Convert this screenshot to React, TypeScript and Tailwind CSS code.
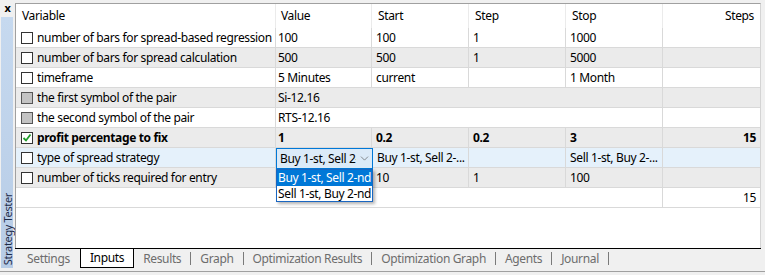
import { ChevronDown } from "lucide-react";

type Check = "off" | "disabled" | "on";

const Box = ({ state }: { state: Check }) => {
  if (state === "disabled") {
    return <div className="w-[12px] h-[12px] shrink-0 border border-[#555] bg-[#c3c3c3]" />;
  }
  return (
    <div className="w-[12px] h-[12px] shrink-0 border border-[#333] bg-white flex items-center justify-center">
      {state === "on" && (
        <svg width="10" height="10" viewBox="0 0 10 10">
          <path d="M1.5 5 L4 7.5 L8.5 1.5" fill="none" stroke="#1f9c2a" strokeWidth="1.8" />
        </svg>
      )}
    </div>
  );
};

const cell = "h-full flex items-center border-r border-[#d9d9d9] overflow-hidden whitespace-nowrap";

const VarCell = ({ state, name, bold }: { state: Check; name: string; bold?: boolean }) => (
  <div className={`${cell} w-[260px] pl-[5px] gap-[4px] ${bold ? "font-bold" : ""}`}>
    <Box state={state} />
    <span>{name}</span>
  </div>
);

const rowCls = "flex h-[20px] border-b border-[#d9d9d9] shrink-0";

const Row = ({
  bg,
  state,
  name,
  vals,
  steps = "",
  bold,
}: {
  bg: string;
  state: Check;
  name: string;
  vals: string[];
  steps?: string;
  bold?: boolean;
}) => (
  <div className={`${rowCls} ${bg} ${bold ? "font-bold" : ""}`}>
    <VarCell state={state} name={name} bold={bold} />
    <div className={`${cell} w-[96px] pl-[2px]`}>{vals[0]}</div>
    <div className={`${cell} w-[97px] pl-[4px]`}>{vals[1]}</div>
    <div className={`${cell} w-[97px] pl-[4px]`}>{vals[2]}</div>
    <div className={`${cell} w-[97px] pl-[4px]`}>{vals[3]}</div>
    <div className="h-full flex items-center justify-end w-[96px] pr-[3px]">{steps}</div>
  </div>
);

const SpanRow = ({ bg, name, value }: { bg: string; name: string; value: string }) => (
  <div className={`${rowCls} ${bg}`}>
    <VarCell state="disabled" name={name} />
    <div className={`${cell} w-[387px] pl-[2px]`}>{value}</div>
    <div className="h-full w-[96px]" />
  </div>
);

const Sep = () => <div className="w-px h-[13px] bg-[#7a7a7a]" />;

export default function App() {
  const tabs = ["Results", "Graph", "Optimization Results", "Optimization Graph", "Agents", "Journal"];

  return (
    <div className="w-[765px] h-[275px] bg-[#f0f0f0] flex flex-col font-['Noto_Sans',sans-serif] text-[12px] tracking-[-0.35px] text-black overflow-hidden">
      <div className="flex h-[271px]">
        {/* side strip */}
        <div className="w-[15px] flex flex-col items-center">
          <div className="h-[17px] w-full flex items-center justify-center font-bold text-[11px] leading-none pb-[3px]">
            x
          </div>
          <div className="w-[12px] ml-[-1px] h-[251px] bg-gradient-to-b from-[#c6d9ef] to-[#b7cce6] flex items-end justify-center pb-[3px]">
            <span className="[writing-mode:vertical-rl] rotate-180 text-[11px] text-[#1e2b48] leading-none whitespace-nowrap">
              Strategy Tester
            </span>
          </div>
        </div>

        <div className="w-[746px] flex flex-col">
          <div className="h-[3px]" />
          <div className="h-[245px] bg-white border-t border-l border-r border-t-[#a0a0a0] border-l-[#a0a0a0] border-r-[#d4d4d4] flex flex-col">
            {/* header */}
            <div className="flex h-[24px] shrink-0">
              <div className="w-[260px] h-full flex items-center pl-[6px] border-r border-[#ebebeb]">Variable</div>
              <div className="w-[96px] h-full flex items-center pl-[5px] border-r border-[#ebebeb]">Value</div>
              <div className="w-[97px] h-full flex items-center pl-[6px] border-r border-[#ebebeb]">Start</div>
              <div className="w-[97px] h-full flex items-center pl-[6px] border-r border-[#ebebeb]">Step</div>
              <div className="w-[97px] h-full flex items-center pl-[6px] border-r border-[#ebebeb]">Stop</div>
              <div className="w-[96px] h-full flex items-center justify-end pr-[5px]">Steps</div>
            </div>

            <Row bg="bg-white" state="off" name="number of bars for spread-based regression" vals={["100", "100", "1", "1000"]} />
            <Row bg="bg-[#ebebeb]" state="off" name="number of bars for spread calculation" vals={["500", "500", "1", "5000"]} />
            <Row bg="bg-white" state="off" name="timeframe" vals={["5 Minutes", "current", "", "1 Month"]} />
            <SpanRow bg="bg-[#ebebeb]" name="the first symbol of the pair" value="Si-12.16" />
            <SpanRow bg="bg-white" name="the second symbol of the pair" value="RTS-12.16" />
            <Row bg="bg-[#ebebeb]" state="on" bold name="profit percentage to fix" vals={["1", "0.2", "0.2", "3"]} steps="15" />

            {/* row with open combo box */}
            <div className={`${rowCls} bg-[#e5f1fb]`}>
              <VarCell state="off" name="type of spread strategy" />
              <div className="h-full w-[96px] relative">
                <div className="absolute left-0 top-0 z-10 w-[97px] h-[21px] border border-[#0078d7] bg-[#dbeaf8] flex items-center pl-[3px]">
                  <span className="w-[76px] overflow-hidden whitespace-nowrap">Buy 1-st, Sell 2-nd</span>
                  <ChevronDown className="ml-[2px] text-[#555]" size={13} strokeWidth={1.2} />
                </div>
                <div className="absolute left-0 top-[21px] z-20 w-[97px] border border-[#1a66c0] bg-white shadow-[2px_2px_3px_rgba(0,0,0,0.3)] flex flex-col">
                  <div className="h-[16px] bg-[#0078d7] text-white flex items-center pl-[1px] overflow-hidden whitespace-nowrap">
                    Buy 1-st, Sell 2-nd
                  </div>
                  <div className="h-[15px] flex items-center pl-[1px] overflow-hidden whitespace-nowrap">
                    Sell 1-st, Buy 2-nd
                  </div>
                </div>
              </div>
              <div className={`${cell} w-[97px] pl-[4px] border-l border-[#d9d9d9]`}>Buy 1-st, Sell 2-...</div>
              <div className={`${cell} w-[97px] pl-[4px]`} />
              <div className={`${cell} w-[97px] pl-[4px]`}>Sell 1-st, Buy 2-...</div>
              <div className="h-full w-[96px]" />
            </div>

            <Row bg="bg-[#ebebeb]" state="off" name="number of ticks required for entry" vals={["", "10", "1", "100"]} />

            <div className={`${rowCls} bg-white`}>
              <div className={`${cell} w-[647px]`} />
              <div className="h-full flex items-center justify-end w-[96px] pr-[3px]">15</div>
            </div>
          </div>

          {/* tabs */}
          <div className="h-[23px] border-t border-black bg-[#f0f0f0] flex items-start text-[#6d6d6d]">
            <div className="h-[19px] flex items-center pl-[12px] pr-[10px]">Settings</div>
            <div className="h-[19px] flex items-center px-[9px] bg-white border-x border-b border-black text-black">
              Inputs
            </div>
            <div className="h-[19px] flex items-center">
              {tabs.map((t) => (
                <div key={t} className="flex items-center">
                  <span className="px-[9px]">{t}</span>
                  <Sep />
                </div>
              ))}
            </div>
          </div>
        </div>
      </div>
      <div className="h-px bg-[#a0a0a0]" />
    </div>
  );
}
